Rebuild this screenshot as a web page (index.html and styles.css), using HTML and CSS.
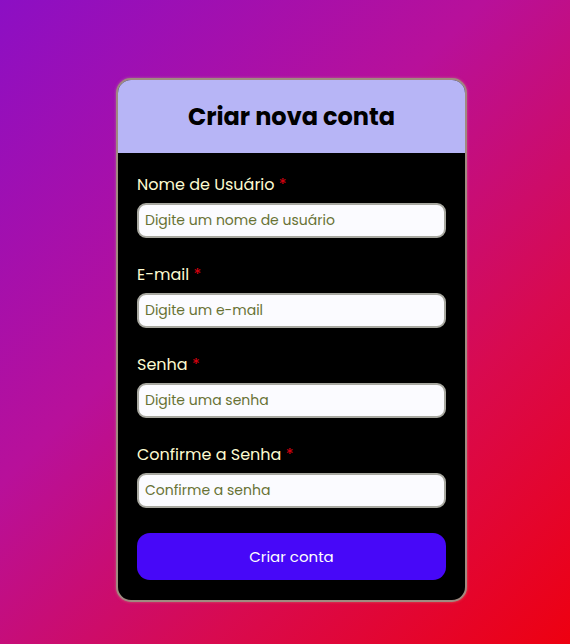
FILE: index.html
```html
<!DOCTYPE html>
<html lang="pt-BR">
<head>
<meta charset="utf-8">
<title>Criar nova conta</title>
<link rel="stylesheet" href="styles.css">
</head>
<body>
<main class="page">
  <form class="card">
    <header class="card-header">
      <h1 class="title">Criar nova conta</h1>
    </header>
    <div class="card-body">
      <div class="field">
        <label class="label">Nome de Usuário <span class="req">*</span></label>
        <input class="input" type="text" placeholder="Digite um nome de usuário">
      </div>
      <div class="field">
        <label class="label">E-mail <span class="req">*</span></label>
        <input class="input" type="email" placeholder="Digite um e-mail">
      </div>
      <div class="field">
        <label class="label">Senha <span class="req">*</span></label>
        <input class="input" type="password" placeholder="Digite uma senha">
      </div>
      <div class="field">
        <label class="label">Confirme a Senha <span class="req">*</span></label>
        <input class="input" type="password" placeholder="Confirme a senha">
      </div>
      <button class="btn" type="button">Criar conta</button>
    </div>
  </form>
</main>
</body>
</html>
```
FILE: styles.css
```css
* { box-sizing: border-box; }
html, body { margin: 0; height: 100%; }
body {
  font-family: "Poppins", "Open Sans", sans-serif;
  background: linear-gradient(135deg, #8c0fc4 0%, #b8109a 40%, #d80a50 70%, #ee0010 100%);
}
.page {
  min-height: 100%;
  display: flex;
  justify-content: center;
  padding: 78px 0 0 13px;
}
.card {
  width: 351px;
  height: 524px;
  background: #000;
  border: 2px solid #a08a80;
  border-radius: 15px;
  overflow: hidden;
  display: flex;
  flex-direction: column;
  box-shadow: 0 0 3px rgba(200, 180, 140, 0.5);
}
.card-header {
  background: #b7b5f6;
  height: 73px;
  display: flex;
  align-items: center;
  justify-content: center;
}
.title {
  margin: 0;
  font-size: 24px;
  font-weight: 700;
  color: #000;
}
.card-body {
  padding: 20px 19px 0 19px;
  display: flex;
  flex-direction: column;
}
.field {
  display: flex;
  flex-direction: column;
  margin-bottom: 25px;
}
.label {
  color: #fdfbd0;
  font-size: 16px;
  line-height: 24px;
  margin-bottom: 6px;
}
.req { color: #e00010; }
.input {
  height: 35px;
  width: 100%;
  border: 2px solid #a8a8a0;
  border-radius: 9px;
  background: #fbfbff;
  padding: 0 6px;
  font-family: inherit;
  font-size: 14px;
  color: #333;
  outline: none;
}
.input::placeholder { color: #687234; }
.btn {
  height: 47px;
  border: none;
  border-radius: 13px;
  background: #4708f8;
  color: #fff;
  font-family: inherit;
  font-size: 15px;
  cursor: pointer;
}
```
